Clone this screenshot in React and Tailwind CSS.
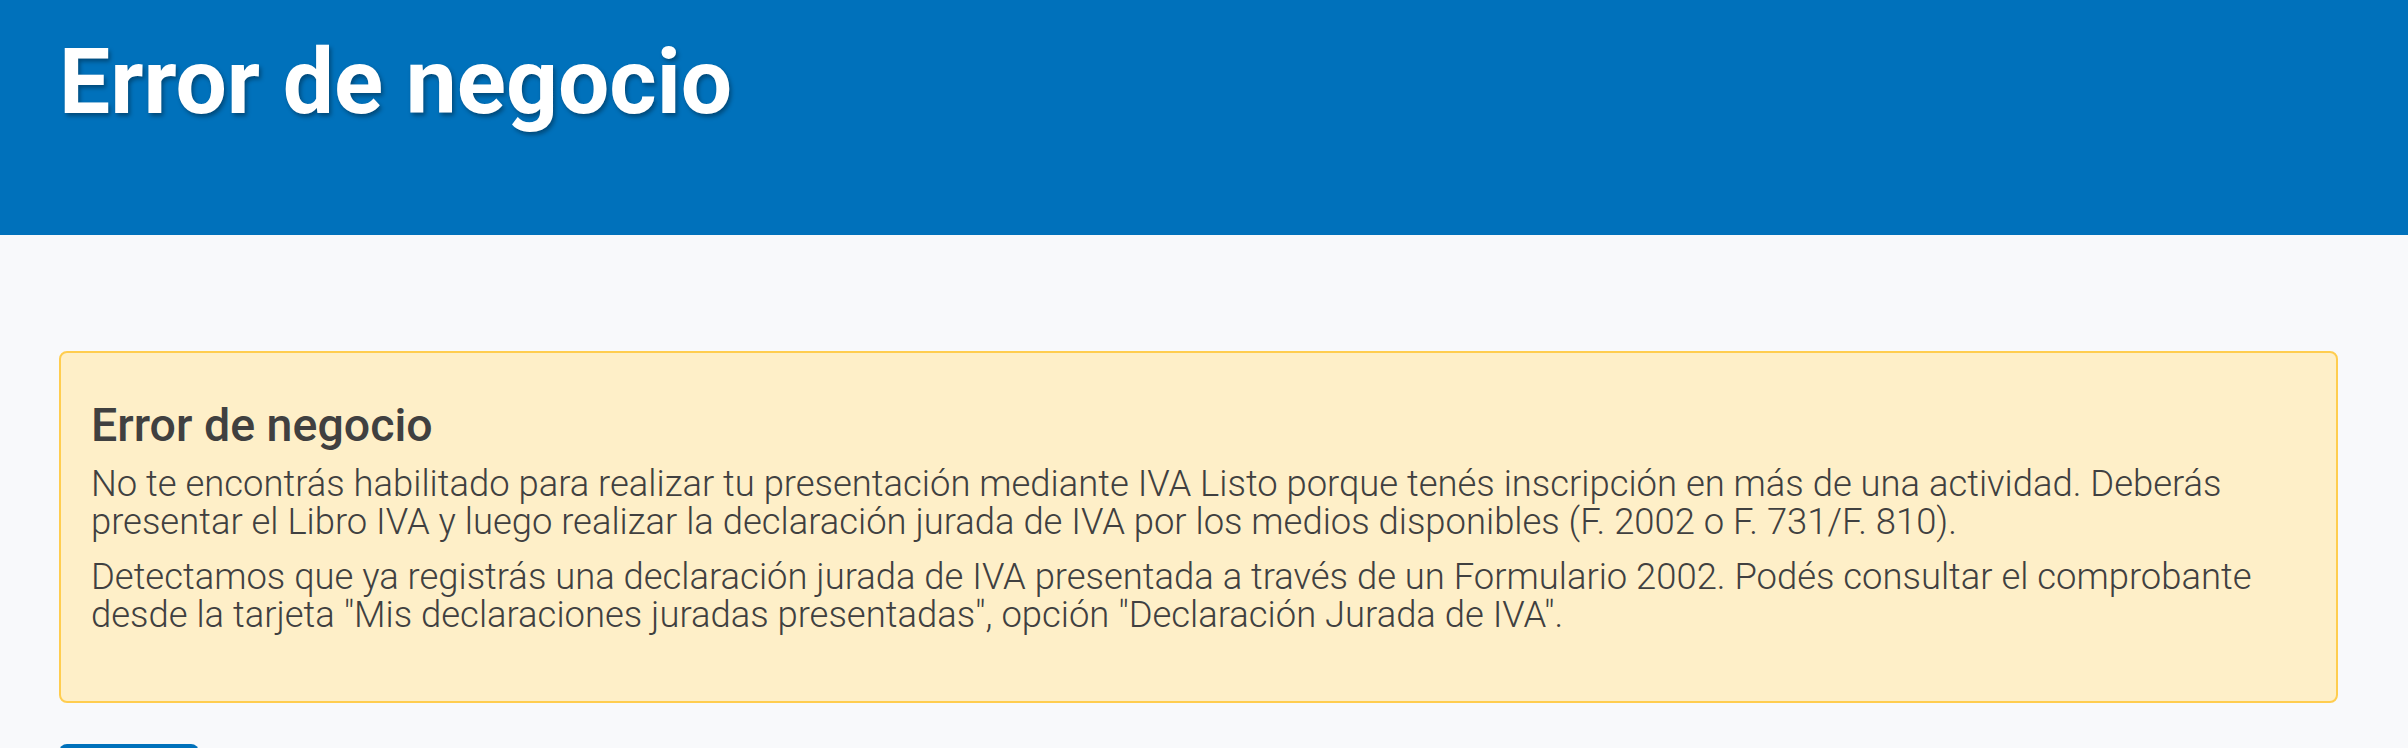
import React from 'react';

const App = () => {
  return (
    <div className="min-h-screen bg-[#f8f9fb] font-['Roboto',sans-serif]">
      {/* Header */}
      <header className="h-[235px] bg-[#0071bb] px-[59px] pt-[28px]">
        <h1 className="text-[91px] font-bold leading-[1.2] text-white [text-shadow:2px_3px_4px_rgba(0,0,0,0.35)]">
          Error de negocio
        </h1>
      </header>

      <main className="pl-[59px] pr-[70px] pt-[116px]">
        {/* Alert */}
        <div className="rounded-lg border-2 border-[#ffcd4f] bg-[#feefc8] px-[30px] pt-[45px] pb-[67px] text-[#404040]">
          <h2 className="mb-[11px] text-[46.5px] font-medium leading-[1.2]">Error de negocio</h2>
          <p className="mb-[17px] text-[36.4px] font-light leading-[38px]">
            No te encontrás habilitado para realizar tu presentación mediante IVA Listo porque tenés inscripción en más de una actividad. Deberás presentar el Libro IVA y luego realizar la declaración jurada de IVA por los medios disponibles (F. 2002 o F. 731/F. 810).
          </p>
          <p className="text-[36.4px] font-light leading-[38px]">
            Detectamos que ya registrás una declaración jurada de IVA presentada a través de un Formulario 2002. Podés consultar el comprobante desde la tarjeta "Mis declaraciones juradas presentadas", opción "Declaración Jurada de IVA".
          </p>
        </div>

        <div className="mt-[41px]">
          <button className="h-[72px] w-[140px] rounded-lg bg-[#0071bb] text-[32px] text-white">
            Volver
          </button>
        </div>
      </main>
    </div>
  );
};

export default App;
